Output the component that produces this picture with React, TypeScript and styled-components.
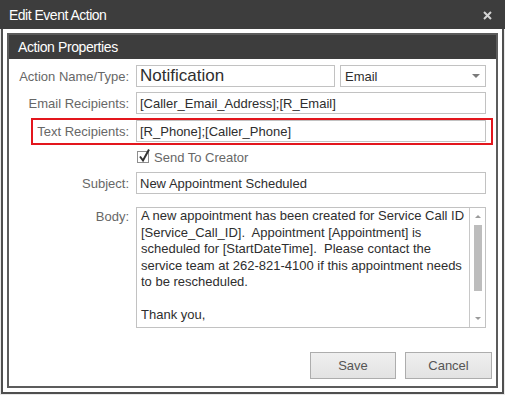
import React from 'react';
import styled, { createGlobalStyle } from 'styled-components';

const GlobalStyle = createGlobalStyle`
  html, body {
    margin: 0;
    padding: 0;
    background: #e9e9e9;
  }
  * {
    box-sizing: border-box;
  }
`;

const Dialog = styled.div`
  width: 505px;
  height: 395px;
  display: flex;
  flex-direction: column;
  background: #e9e9e9;
  font-family: "Liberation Sans", Arial, sans-serif;
`;

const TitleBar = styled.div`
  height: 29px;
  flex-shrink: 0;
  display: flex;
  align-items: center;
  justify-content: space-between;
  padding: 0 13px 0 9px;
  background: #3d3d3d;
  color: #ffffff;
  font-size: 14px;
  letter-spacing: -0.5px;
`;

const CloseButton = styled.span`
  display: flex;
  align-items: center;
  margin-top: 1px;
`;

const DialogBody = styled.div`
  flex: 1;
  display: flex;
  margin: 0 1px 1px 1px;
  padding: 4px;
  background: #ffffff;
  border: 2px solid #4f4f4f;
  border-top: none;
`;

const Fieldset = styled.div`
  flex: 1;
  display: flex;
  flex-direction: column;
  border: 2px solid #5c5c5c;
`;

const Legend = styled.div`
  height: 24px;
  display: flex;
  align-items: center;
  padding-left: 9px;
  background: #3d3d3d;
  color: #ffffff;
  font-size: 14px;
  letter-spacing: -0.4px;
`;

const Form = styled.div`
  flex: 1;
  display: flex;
  flex-direction: column;
  padding: 6px 10px 7px 0;
`;

const Row = styled.div<{ $top?: number; $highlight?: boolean; $alignTop?: boolean }>`
  position: relative;
  display: flex;
  align-items: ${p => (p.$alignTop ? 'flex-start' : 'center')};
  gap: 7px;
  margin-top: ${p => p.$top ?? 0}px;

  ${p =>
    p.$highlight &&
    `
    &::before {
      content: '';
      position: absolute;
      left: 22px;
      top: -2px;
      right: -7px;
      bottom: -3px;
      border: 2px solid #e3161d;
      pointer-events: none;
    }
  `}
`;

const Label = styled.label<{ $padTop?: number }>`
  width: 120px;
  flex-shrink: 0;
  text-align: right;
  font-size: 13px;
  color: #676767;
  padding-top: ${p => p.$padTop ?? 0}px;
`;

const Fields = styled.div`
  flex: 1;
  display: flex;
  gap: 5px;
`;

const TextBox = styled.div<{ $width?: number; $big?: boolean }>`
  height: 22px;
  display: flex;
  align-items: center;
  padding: 0 3px;
  flex: ${p => (p.$width ? `0 0 ${p.$width}px` : '1')};
  border: 1px solid #c2c2c2;
  background: #ffffff;
  color: #2e2e2e;
  font-size: ${p => (p.$big ? 17 : 13)}px;
  white-space: nowrap;
  overflow: hidden;
`;

const Select = styled.div`
  flex: 1;
  height: 22px;
  display: flex;
  align-items: center;
  justify-content: space-between;
  padding: 0 5px 0 4px;
  border: 1px solid #c2c2c2;
  background: #ffffff;
  color: #2e2e2e;
  font-size: 13px;
`;

const Caret = styled.span`
  width: 0;
  height: 0;
  border-left: 4px solid transparent;
  border-right: 4px solid transparent;
  border-top: 4px solid #7a7a7a;
`;

const CheckRow = styled.div`
  display: flex;
  align-items: center;
  height: 12px;
  padding-left: 1px;
  gap: 5px;
  font-size: 13px;
  color: #676767;
`;

const CheckBox = styled.span`
  position: relative;
  width: 12px;
  height: 12px;
  border: 1px solid #8e8e8e;
  background: #ffffff;

  svg {
    position: absolute;
    left: 0px;
    top: -4px;
  }
`;

const TextArea = styled.div`
  flex: 1;
  height: 121px;
  display: flex;
  border: 1px solid #c2c2c2;
  background: #ffffff;
`;

const AreaText = styled.div`
  flex: 1;
  padding: 0 4px;
  font-size: 13px;
  line-height: 16.5px;
  color: #2e2e2e;
  white-space: pre;
  overflow: hidden;
`;

const ScrollTrack = styled.div`
  width: 16px;
  flex-shrink: 0;
  display: flex;
  flex-direction: column;
  align-items: center;
  border-left: 1px solid #c8c8c8;
`;

const ScrollArrow = styled.span<{ $down?: boolean }>`
  width: 0;
  height: 0;
  margin-top: ${p => (p.$down ? 'auto' : '7px')};
  margin-bottom: ${p => (p.$down ? '7px' : '0')};
  border-left: 3px solid transparent;
  border-right: 3px solid transparent;
  ${p => (p.$down ? 'border-top: 3px solid #9a9a9a;' : 'border-bottom: 3px solid #9a9a9a;')}
`;

const ScrollThumb = styled.div`
  width: 8px;
  height: 66px;
  margin-top: 7px;
  background: #bdbdbd;
`;

const Footer = styled.div`
  margin-top: auto;
  margin-right: -6px;
  display: flex;
  justify-content: flex-end;
  gap: 9px;
`;

const Button = styled.button<{ $width: number }>`
  width: ${p => p.$width}px;
  height: 27px;
  border: 1px solid #adadad;
  background: linear-gradient(#efefef, #e3e3e3);
  color: #555555;
  font-family: "Liberation Sans", Arial, sans-serif;
  font-size: 13px;
  padding: 0;
`;

const bodyText = [
  'A new appointment has been created for Service Call ID',
  '[Service_Call_ID].  Appointment [Appointment] is',
  'scheduled for [StartDateTime].  Please contact the',
  'service team at 262-821-4100 if this appointment needs',
  'to be rescheduled.',
  '',
  'Thank you,',
].join('\n');

const App = () => {
  return (
    <>
      <GlobalStyle />
      <Dialog>
        <TitleBar>
          <span>Edit Event Action</span>
          <CloseButton>
            <svg width="9" height="9" viewBox="0 0 9 9">
              <path d="M1 1 L8 8 M8 1 L1 8" stroke="#d4d4d4" strokeWidth="2" />
            </svg>
          </CloseButton>
        </TitleBar>
        <DialogBody>
          <Fieldset>
            <Legend>Action Properties</Legend>
            <Form>
              <Row>
                <Label>Action Name/Type:</Label>
                <Fields>
                  <TextBox $width={199} $big>Notification</TextBox>
                  <Select>
                    <span>Email</span>
                    <Caret />
                  </Select>
                </Fields>
              </Row>
              <Row $top={5}>
                <Label>Email Recipients:</Label>
                <Fields>
                  <TextBox>[Caller_Email_Address];[R_Email]</TextBox>
                </Fields>
              </Row>
              <Row $top={6} $highlight>
                <Label>Text Recipients:</Label>
                <Fields>
                  <TextBox>[R_Phone];[Caller_Phone]</TextBox>
                </Fields>
              </Row>
              <Row $top={9}>
                <Label />
                <CheckRow>
                  <CheckBox>
                    <svg width="13" height="15" viewBox="0 0 13 15">
                      <path d="M2 8.5 L5 12.5 L11 1.5" fill="none" stroke="#333" strokeWidth="2" />
                    </svg>
                  </CheckBox>
                  Send To Creator
                </CheckRow>
              </Row>
              <Row $top={9}>
                <Label>Subject:</Label>
                <Fields>
                  <TextBox>New Appointment Scheduled</TextBox>
                </Fields>
              </Row>
              <Row $top={13} $alignTop>
                <Label $padTop={2}>Body:</Label>
                <TextArea>
                  <AreaText>{bodyText}</AreaText>
                  <ScrollTrack>
                    <ScrollArrow />
                    <ScrollThumb />
                    <ScrollArrow $down />
                  </ScrollTrack>
                </TextArea>
              </Row>
              <Footer>
                <Button $width={86}>Save</Button>
                <Button $width={87}>Cancel</Button>
              </Footer>
            </Form>
          </Fieldset>
        </DialogBody>
      </Dialog>
    </>
  );
};

export default App;
